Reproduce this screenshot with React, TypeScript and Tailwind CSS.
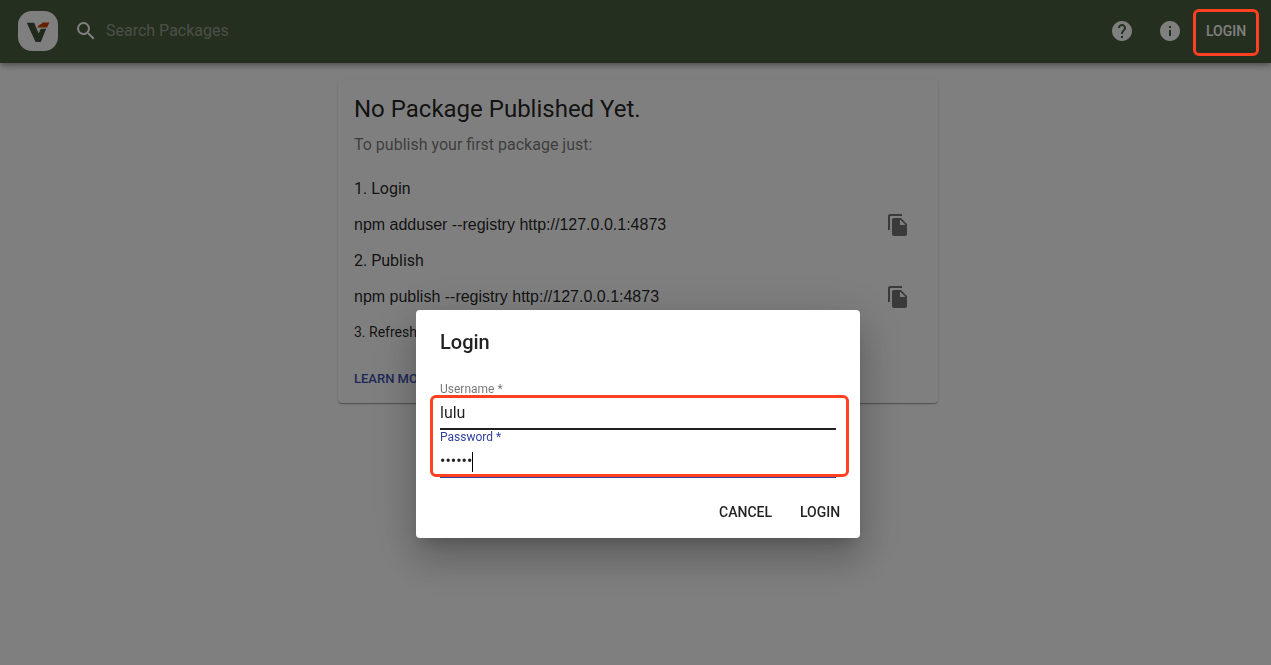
import type { ReactNode } from "react";
import { MdFileCopy, MdHelp, MdInfo, MdSearch } from "react-icons/md";

function Logo() {
  return (
    <svg viewBox="0 0 40 40" className="size-10 shrink-0" role="img" aria-label="Verdaccio">
      <rect width="40" height="40" rx="14" fill="#fff" />
      <path d="M8.7 11.8h7.5l4.4 10.8 2.2-4.9h5.4L22.8 31h-5.2z" fill="#405236" />
      <path d="M19.6 16.4h9.5l2.3-4.8h-7.2l-.7 1.6h-1.7l-.6 1.4h-1z" fill="#cd4000" />
    </svg>
  );
}

function Header() {
  return (
    <header className="flex h-[63px] items-center bg-[#4b5e40] pr-[13px] pb-px pl-[18px] text-white shadow-[0_2px_4px_-1px_rgba(0,0,0,0.2),0_4px_5px_0_rgba(0,0,0,0.14),0_1px_10px_0_rgba(0,0,0,0.12)]">
      <a href="#home">
        <Logo />
      </a>
      <div className="ml-4 flex grow items-center gap-2">
        <MdSearch className="size-6" />
        <input
          type="search"
          aria-label="Search Packages"
          placeholder="Search Packages"
          className="w-64 bg-transparent text-base text-white outline-none placeholder:text-[#959e90]"
        />
      </div>
      <button type="button" aria-label="Help" className="p-3">
        <MdHelp className="size-6" />
      </button>
      <button type="button" aria-label="Information" className="p-3">
        <MdInfo className="size-6" />
      </button>
      <button type="button" className="min-w-16 py-1.5 text-sm font-medium uppercase">
        Login
      </button>
    </header>
  );
}

function Command({ children }: { children: ReactNode }) {
  return (
    <div className="flex h-12 items-center justify-between">
      <code className="font-['Liberation_Sans',sans-serif] text-base">{children}</code>
      <button type="button" aria-label="Copy to clipboard" className="p-3 text-black/54">
        <MdFileCopy className="size-6" />
      </button>
    </div>
  );
}

function HelpCard() {
  return (
    <section className="w-[600px] rounded bg-white px-4 pt-[14px] pb-2 text-black/87 shadow-[0_2px_1px_-1px_rgba(0,0,0,0.2),0_1px_1px_0_rgba(0,0,0,0.14),0_1px_3px_0_rgba(0,0,0,0.12)]">
      <h1 className="text-2xl">No Package Published Yet.</h1>
      <p className="mt-2 text-base text-black/54">To publish your first package just:</p>
      <p className="mt-5 text-base">1. Login</p>
      <Command>npm adduser --registry http://127.0.0.1:4873</Command>
      <p className="text-base">2. Publish</p>
      <Command>npm publish --registry http://127.0.0.1:4873</Command>
      <p className="text-sm leading-[22px]">3. Refresh this page.</p>
      <a
        href="https://verdaccio.org/docs/en/installation"
        className="mt-5 inline-flex h-8 items-center text-[13px] font-medium text-[#3f51b5] uppercase"
      >
        Learn more
      </a>
    </section>
  );
}

function LoginDialog() {
  return (
    <div
      role="dialog"
      aria-modal="true"
      aria-labelledby="login-title"
      className="w-[444px] rounded bg-white pt-4 text-black/87 shadow-[0_11px_15px_-7px_rgba(0,0,0,0.2),0_24px_38px_3px_rgba(0,0,0,0.14),0_9px_46px_8px_rgba(0,0,0,0.12)]"
    >
      <h2 id="login-title" className="px-6 text-xl leading-8 font-medium">
        Login
      </h2>
      <form>
        <div className="relative mx-6 mt-6">
          <div className="h-12 border-b-2 border-[#212121]">
            <label htmlFor="username" className="block text-xs leading-[14px] text-black/54">
              Username *
            </label>
            <input
              id="username"
              type="text"
              defaultValue="lulu"
              className="block h-8 w-full bg-transparent text-base outline-none"
            />
          </div>
          <div className="relative h-12 border-b-2 border-[#303f9f]">
            <label htmlFor="password" className="block text-xs leading-[14px] text-[#303f9f]">
              Password *
            </label>
            <input
              id="password"
              type="password"
              defaultValue="123456"
              className="block h-8 w-full bg-transparent text-base outline-none"
            />
            <span aria-hidden="true" className="absolute bottom-1 left-8 h-5 w-px bg-black" />
          </div>
          <div
            aria-hidden="true"
            className="pointer-events-none absolute top-[13px] -right-[13px] bottom-px -left-[10px] rounded-md border-3 border-[#ff4122]"
          />
        </div>
        <div className="mt-4 flex justify-end gap-2 p-2 pt-0 text-sm font-medium">
          <button type="button" className="h-9 min-w-16 px-2 uppercase">
            Cancel
          </button>
          <button type="submit" className="h-9 min-w-16 px-2 uppercase">
            Login
          </button>
        </div>
      </form>
    </div>
  );
}

export default function App() {
  return (
    <div className="min-h-screen bg-white font-[Roboto,sans-serif]">
      <Header />
      <main className="mt-4 flex justify-center pl-[5px]">
        <HelpCard />
      </main>
      <div className="fixed inset-0 flex items-start justify-center bg-black/50 pt-[310px] pl-[5px]">
        <div
          aria-hidden="true"
          className="pointer-events-none absolute top-[9px] right-3 h-[47px] w-[66px] rounded-md border-3 border-[#ff4122]"
        />
        <LoginDialog />
      </div>
    </div>
  );
}
